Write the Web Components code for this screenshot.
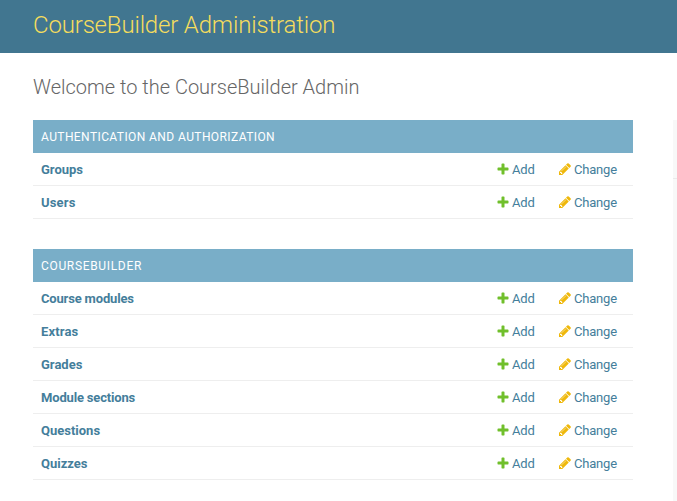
<!DOCTYPE html>
<html lang="en"><head><meta charset="utf-8"><title>CourseBuilder Administration</title>
<style>body{margin:0;background:#fff;font-family:Roboto,"Liberation Sans",sans-serif;font-size:13px;color:#333;overflow:hidden}</style></head>
<body><admin-page></admin-page>
<script>
class AdminHeader extends HTMLElement{
  constructor(){super();this.attachShadow({mode:'open'}).innerHTML=`
  <style>:host{display:flex;align-items:center;height:53px;padding:0 33px;box-sizing:border-box;background:#417690;color:#f5dd5d}
  h1{margin:0 0 3px;font-size:24px;font-weight:300;line-height:28px;letter-spacing:-.17px;white-space:nowrap}</style><h1><slot></slot></h1>`;}
}
customElements.define('admin-header',AdminHeader);
class ModelRow extends HTMLElement{
  constructor(){super();this.attachShadow({mode:'open'}).innerHTML=`
  <style>:host{display:grid;grid-template-columns:1fr 62px 75px;align-items:center;height:33px;box-sizing:border-box;border-bottom:1px solid #eee;padding:0 0 0 8px;color:#447e9b;font-size:13px;line-height:16px}
  b{font-weight:700;padding-top:2px;letter-spacing:var(--label-spacing,0)}
  .link{display:flex;align-items:center}
  .link span{padding-top:2px;letter-spacing:-.2px}
  svg{display:block;flex:none;width:14px;height:14px;margin:0 2px 1px 0}</style>
  <b><slot></slot></b>
  <span class="link"><svg viewBox="0 0 1792 1792"><path fill="#70bf2b" d="M1600 796v192q0 40-28 68t-68 28h-416v416q0 40-28 68t-68 28h-192q-40 0-68-28t-28-68v-416h-416q-40 0-68-28t-28-68v-192q0-40 28-68t68-28h416v-416q0-40 28-68t68-28h192q40 0 68 28t28 68v416h416q40 0 68 28t28 68z"/></svg><span>Add</span></span>
  <span class="link"><svg viewBox="0 0 1792 1792"><path fill="#efb80b" d="M491 1536l91-91-235-235-91 91v107h128v128h107zm523-928q0-22-22-22-10 0-17 7l-542 542q-7 7-7 17 0 22 22 22 10 0 17-7l542-542q7-7 7-17zm-54-192l416 416-832 832h-416v-416zm683 96q0 53-37 90l-166 166-416-416 166-165q36-38 90-38 53 0 91 38l235 234q37 39 37 91z"/></svg><span>Change</span></span>`;}
}
customElements.define('model-row',ModelRow);
class AppModule extends HTMLElement{
  constructor(){super();this.attachShadow({mode:'open'}).innerHTML=`
  <style>:host{display:block;margin-bottom:30px}
  h2{display:flex;align-items:center;height:33px;margin:0;padding:0 8px;background:#79aec8;color:#fff;font-size:12px;font-weight:400;letter-spacing:var(--title-spacing,.41px);text-transform:uppercase}</style>
  <h2><slot name="title"></slot></h2><slot></slot>`;}
}
customElements.define('app-module',AppModule);
class AdminPage extends HTMLElement{
  constructor(){super();this.attachShadow({mode:'open'}).innerHTML=`
  <style>:host{display:block;height:501px;overflow:hidden}
  main{display:grid;grid-template-columns:600px 4px;column-gap:40px;padding:0 0 0 33px}
  h1{grid-column:1/-1;margin:0;padding:22px 0 21px;font-size:20px;font-weight:300;line-height:24px;color:#666}
  .tight{--label-spacing:-.17px}
  .wide{--label-spacing:.15px}
  .course{--title-spacing:.67px}
  aside{background:#f8f8f8;height:381px}
  aside hr{margin:58px 0 0;border:0;border-top:1px solid #eaeaea}</style>
  <admin-header>CourseBuilder Administration</admin-header>
  <main><h1>Welcome to the CourseBuilder Admin</h1>
  <div><app-module><span slot="title">Authentication and Authorization</span><model-row>Groups</model-row><model-row class="wide">Users</model-row></app-module>
  <app-module class="course"><span slot="title">CourseBuilder</span><model-row class="tight">Course modules</model-row><model-row class="wide">Extras</model-row><model-row>Grades</model-row><model-row class="tight">Module sections</model-row><model-row>Questions</model-row><model-row>Quizzes</model-row></app-module></div>
  <aside><hr></aside></main>`;}
}
customElements.define('admin-page',AdminPage);
</script></body></html>
